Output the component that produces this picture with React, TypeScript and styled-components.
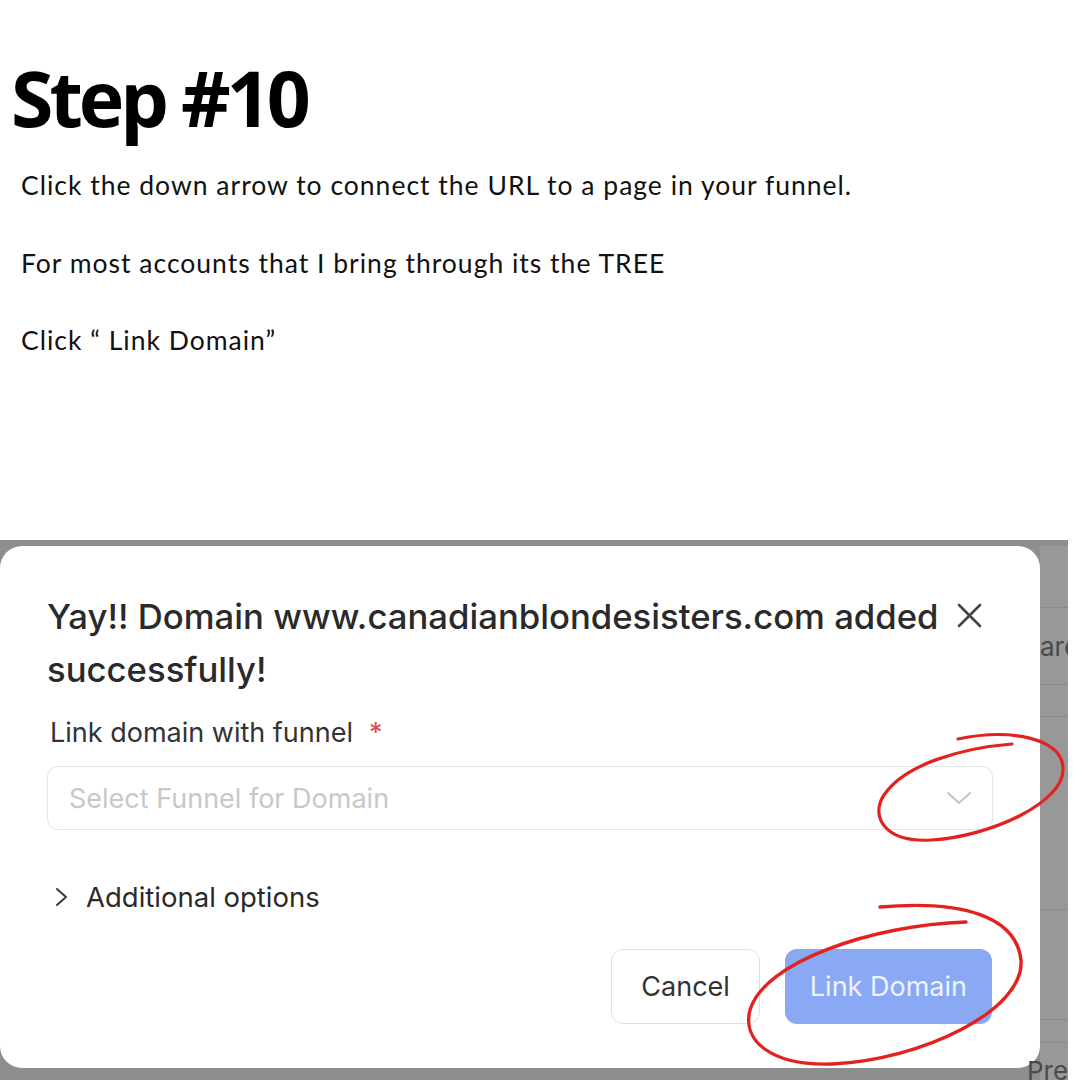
import React from "react";
import styled, { createGlobalStyle } from "styled-components";

const Global = createGlobalStyle`
  html, body { margin: 0; padding: 0; background: #ffffff; }
  * { box-sizing: border-box; }
`;

const Page = styled.div`
  position: relative;
  width: 1080px;
  height: 1080px;
  overflow: hidden;
  background: #ffffff;
  display: flex;
  flex-direction: column;
`;

const Heading = styled.h1`
  margin: 0;
  padding: 53px 0 0 11px;
  font-family: "Open Sans", "Noto Sans", sans-serif;
  font-weight: 700;
  font-size: 77px;
  line-height: 89px;
  letter-spacing: -4px;
  color: #000;
`;

const Instructions = styled.div`
  display: flex;
  flex-direction: column;
  gap: 45.5px;
  padding: 27px 0 0 21px;
`;

const Line = styled.p`
  margin: 0;
  font-family: Lato, "Noto Sans", sans-serif;
  font-size: 26.5px;
  line-height: 32px;
  letter-spacing: 1px;
  color: #111;
`;

const Shot = styled.div`
  margin-top: auto;
  width: 1068px;
  height: 540px;
  display: grid;
  grid-template-columns: 1040px 28px;
  grid-template-rows: 6px 522px 12px;
  background: #8e8e8e;
`;

const Modal = styled.div`
  grid-column: 1;
  grid-row: 2;
  background: #ffffff;
  border-radius: 22px;
  padding: 44px 56px 0 47px;
  display: flex;
  flex-direction: column;
  font-family: Inter, "Noto Sans", sans-serif;
`;

const TitleRow = styled.div`
  display: flex;
  align-items: flex-start;
  justify-content: space-between;
  gap: 12px;
`;

const Title = styled.h2`
  margin: 0;
  font-size: 34.7px;
  font-weight: 500;
  line-height: 53px;
  color: #2a2a2a;
`;

const CloseBtn = styled.span`
  display: flex;
  margin-top: 12px;
  margin-right: 1px;
  color: #444;
`;

const Label = styled.div`
  margin-top: 20px;
  padding-left: 3px;
  font-size: 27px;
  line-height: 34px;
  color: #333;
`;

const Req = styled.span`
  color: #e0474c;
  margin-left: 16px;
`;

const SelectBox = styled.div`
  margin-top: 16px;
  width: 946px;
  height: 64px;
  border: 1.5px solid #e4e4e4;
  border-radius: 11px;
  display: flex;
  align-items: center;
  justify-content: space-between;
  padding: 0 20px 0 21px;
  font-size: 27px;
  color: #c8c8c8;
`;

const Expander = styled.div`
  margin-top: 50px;
  display: flex;
  align-items: center;
  gap: 18px;
  padding-left: 8px;
  font-size: 27.5px;
  color: #2a2a2a;
`;

const Actions = styled.div`
  margin-top: 35px;
  margin-right: -8px;
  display: flex;
  justify-content: flex-end;
  gap: 25px;
`;

const Button = styled.button<{ $primary?: boolean }>`
  height: 75px;
  padding: 0 ${(p) => (p.$primary ? "25px" : "29px")};
  border-radius: 12px;
  font-family: Inter, "Noto Sans", sans-serif;
  font-size: 27px;
  border: ${(p) => (p.$primary ? "none" : "1.5px solid #dedede")};
  background: ${(p) => (p.$primary ? "#89a9f4" : "#ffffff")};
  color: ${(p) => (p.$primary ? "#eef3ff" : "#333333")};
`;

const Strip = styled.div`
  grid-column: 2;
  grid-row: 2 / 4;
  background: #989898;
  display: flex;
  flex-direction: column;
  overflow: visible;
  font-family: Inter, "Noto Sans", sans-serif;
  font-size: 26px;
  color: #4a4a4a;
`;

const StripRow = styled.div<{ $h: number }>`
  height: ${(p) => p.$h}px;
  border-bottom: 1.5px solid #8a8a8a;
  display: flex;
  align-items: center;
  white-space: nowrap;
  overflow: hidden;
`;

const StripTail = styled.div`
  flex: 1;
  display: flex;
  align-items: flex-end;
  margin-left: -13px;
  white-space: nowrap;
  line-height: 18px;
`;

const Annot = styled.svg`
  position: absolute;
  inset: 0;
  pointer-events: none;
`;

export default function App() {
  return (
    <Page>
      <Global />
      <Heading>Step #10</Heading>
      <Instructions>
        <Line>Click the down arrow to connect the URL to a page in your funnel.</Line>
        <Line>For most accounts that I bring through its the TREE</Line>
        <Line>Click “ Link Domain”</Line>
      </Instructions>
      <Shot>
        <Modal>
          <TitleRow>
            <Title>
              Yay!! Domain www.canadianblondesisters.com added
              <br />
              successfully!
            </Title>
            <CloseBtn>
              <svg width="27" height="27" viewBox="0 0 27 27">
                <path d="M3 3 L24 24 M24 3 L3 24" stroke="currentColor" strokeWidth="2.6" strokeLinecap="round" />
              </svg>
            </CloseBtn>
          </TitleRow>
          <Label>
            Link domain with funnel<Req>*</Req>
          </Label>
          <SelectBox>
            <span>Select Funnel for Domain</span>
            <svg width="26" height="14" viewBox="0 0 26 14">
              <path d="M2 2 L13 12 L24 2" fill="none" stroke="#c4c4c4" strokeWidth="2" strokeLinecap="round" strokeLinejoin="round" />
            </svg>
          </SelectBox>
          <Expander>
            <svg width="13" height="20" viewBox="0 0 13 20">
              <path d="M2 2 L11 10 L2 18" fill="none" stroke="#3a3a3a" strokeWidth="2" strokeLinecap="round" strokeLinejoin="round" />
            </svg>
            <span>Additional options</span>
          </Expander>
          <Actions>
            <Button>Cancel</Button>
            <Button $primary>Link Domain</Button>
          </Actions>
        </Modal>
        <Strip>
          <StripRow $h={62} />
          <StripRow $h={77}>are</StripRow>
          <StripRow $h={32} />
          <StripRow $h={193} />
          <StripRow $h={110} />
          <StripRow $h={23} />
          <StripTail>Pre</StripTail>
        </Strip>
      </Shot>
      <Annot width="1080" height="1080" viewBox="0 0 1080 1080">
        <path
          d="M958 739 C1010 728, 1062 738, 1063 768 C1065 802, 992 836, 932 840 C884 843, 870 816, 884 795 C905 764, 962 748, 1012 744"
          fill="none"
          stroke="#e3211f"
          strokeWidth="3.2"
          strokeLinecap="round"
        />
        <path
          d="M880 907 C962 900, 1016 916, 1021 960 C1025 1010, 922 1060, 832 1064 C770 1066, 742 1040, 750 1010 C764 962, 872 925, 966 922"
          fill="none"
          stroke="#e3211f"
          strokeWidth="3.4"
          strokeLinecap="round"
        />
      </Annot>
    </Page>
  );
}
